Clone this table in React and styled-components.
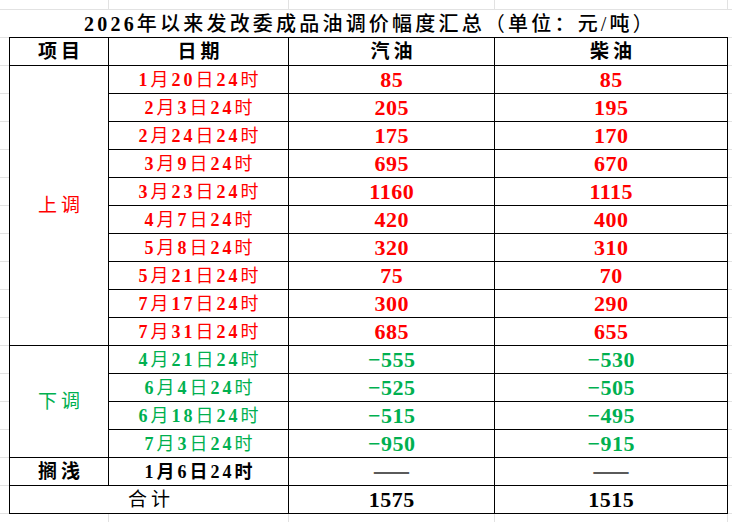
import React from 'react'
import styled, { createGlobalStyle } from 'styled-components'

const GlobalStyle = createGlobalStyle`
  html, body { margin: 0; padding: 0; background: #fff; }
  body { font-family: "Liberation Serif", "Noto Sans CJK SC", serif; }
`

const RED = '#ff0000'
const GREEN = '#00b050'
const GRID = '#e2e2e2'

const upRows = [
  ['1月20日24时', '85', '85'],
  ['2月3日24时', '205', '195'],
  ['2月24日24时', '175', '170'],
  ['3月9日24时', '695', '670'],
  ['3月23日24时', '1160', '1115'],
  ['4月7日24时', '420', '400'],
  ['5月8日24时', '320', '310'],
  ['5月21日24时', '75', '70'],
  ['7月17日24时', '300', '290'],
  ['7月31日24时', '685', '655'],
]

const downRows = [
  ['4月21日24时', '−555', '−530'],
  ['6月4日24时', '−525', '−505'],
  ['6月18日24时', '−515', '−495'],
  ['7月3日24时', '−950', '−915'],
]

// spreadsheet gridlines behind the table
const Sheet = styled.div`
  width: 732px;
  height: 522px;
  overflow: hidden;
  box-sizing: border-box;
  padding: 9px 0 0 9px;
  background-color: #fff;
  background-image:
    repeating-linear-gradient(to bottom, ${GRID} 0 1px, transparent 1px 28px),
    linear-gradient(to right,
      transparent 108px, ${GRID} 108px 109px,
      transparent 109px 288px, ${GRID} 288px 289px,
      transparent 289px 494px, ${GRID} 494px 495px,
      transparent 495px 727px, ${GRID} 727px 728px,
      transparent 728px);
  background-position: 0 9px, 0 0;
`

const Table = styled.table`
  border-collapse: collapse;
  table-layout: fixed;
  width: 719px;
`

const Row = styled.tr`
  height: 28px;
`

const Title = styled.th`
  padding: 0 0 0 3px;
  background: #fff;
  border-top: 1px solid ${GRID};
  font-size: 20px;
  font-weight: 500;
  letter-spacing: 3.2px;
  color: #000;
  text-align: center;
  vertical-align: middle;
  line-height: 20px;
  white-space: nowrap;
`

const Paren = styled.span`
  font-family: "Noto Sans CJK SC", sans-serif;
  font-weight: 400;
`

const Cell = styled.td`
  padding: 0 0 0 ${({ $spacing }) => ($spacing == null ? 3 : $spacing)}px;
  background: #fff;
  border: 1px solid #000;
  text-align: center;
  vertical-align: middle;
  white-space: nowrap;
  line-height: 20px;
  color: ${({ $color }) => $color || '#000'};
  font-size: ${({ $size }) => $size || 18}px;
  font-weight: ${({ $bold }) => ($bold ? 700 : 400)};
  letter-spacing: ${({ $spacing }) => ($spacing == null ? 3 : $spacing)}px;
`

const HeadCell = styled(Cell).attrs({ as: 'th' })`
  font-size: 19px;
  font-weight: 700;
  letter-spacing: 4px;
  padding-left: 4px;
`

const Digits = styled.span`
  font-weight: 700;
`

const Dash = styled.span`
  display: inline-block;
  font-family: "Noto Sans CJK SC", sans-serif;
  color: #5a5a5a;
  font-weight: 700;
  font-size: 22px;
  line-height: 18px;
  letter-spacing: 0;
`

// digits bold serif, cjk lighter like the sheet's song font
function Mixed({ text }) {
  const parts = text.split(/(\d+)/).filter(Boolean)
  return parts.map((p, i) => (/^\d+$/.test(p) ? <Digits key={i}>{p}</Digits> : <span key={i}>{p}</span>))
}

function DataRow({ row, color, label, span }) {
  return (
    <Row>
      {label && (
        <Cell rowSpan={span} $color={color} $size={19} $spacing={4}>
          {label}
        </Cell>
      )}
      <Cell $color={color}>
        <Mixed text={row[0]} />
      </Cell>
      <Cell $color={color} $size={22} $bold $spacing={0.5}>{row[1]}</Cell>
      <Cell $color={color} $size={22} $bold $spacing={0.5}>{row[2]}</Cell>
    </Row>
  )
}

export default function App() {
  return (
    <>
      <GlobalStyle />
      <Sheet>
        <Table>
          <colgroup>
            <col style={{ width: 99 }} />
            <col style={{ width: 180 }} />
            <col style={{ width: 206 }} />
            <col style={{ width: 233 }} />
          </colgroup>
          <tbody>
            <Row>
              <Title colSpan={4}>
                <Mixed text="2026年以来发改委成品油调价幅度汇总" />
                <Paren>（</Paren>单位：元/吨<Paren>）</Paren>
              </Title>
            </Row>
            <Row>
              <HeadCell>项目</HeadCell>
              <HeadCell>日期</HeadCell>
              <HeadCell>汽油</HeadCell>
              <HeadCell>柴油</HeadCell>
            </Row>
            {upRows.map((r, i) => (
              <DataRow key={r[0]} row={r} color={RED} label={i === 0 ? '上调' : null} span={upRows.length} />
            ))}
            {downRows.map((r, i) => (
              <DataRow key={r[0]} row={r} color={GREEN} label={i === 0 ? '下调' : null} span={downRows.length} />
            ))}
            <Row>
              <Cell $size={19} $bold $spacing={4}>搁浅</Cell>
              <Cell $bold>
                <Mixed text="1月6日24时" />
              </Cell>
              <Cell $spacing={0}><Dash>——</Dash></Cell>
              <Cell $spacing={0}><Dash>——</Dash></Cell>
            </Row>
            <Row>
              <Cell colSpan={2} $size={19} $spacing={4}>合计</Cell>
              <Cell $size={22} $bold $spacing={0.5}>1575</Cell>
              <Cell $size={22} $bold $spacing={0.5}>1515</Cell>
            </Row>
          </tbody>
        </Table>
      </Sheet>
    </>
  )
}
